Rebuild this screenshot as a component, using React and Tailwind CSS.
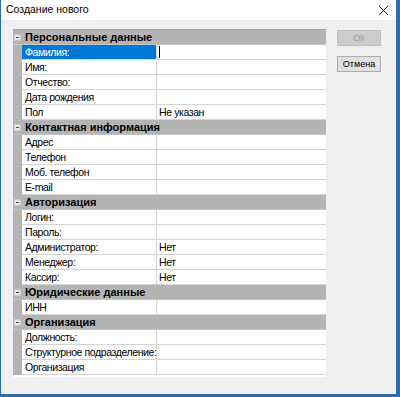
import React from 'react';

const sections = [
  {
    title: 'Персональные данные',
    rows: [
      ['Фамилия:', '', true],
      ['Имя:', ''],
      ['Отчество:', ''],
      ['Дата рождения', ''],
      ['Пол', 'Не указан'],
    ],
  },
  {
    title: 'Контактная информация',
    rows: [
      ['Адрес', ''],
      ['Телефон', ''],
      ['Моб. телефон', ''],
      ['E-mail', ''],
    ],
  },
  {
    title: 'Авторизация',
    rows: [
      ['Логин:', ''],
      ['Пароль:', ''],
      ['Администратор:', 'Нет'],
      ['Менеджер:', 'Нет'],
      ['Кассир:', 'Нет'],
    ],
  },
  {
    title: 'Юридические данные',
    rows: [['ИНН', '']],
  },
  {
    title: 'Организация',
    rows: [
      ['Должность:', ''],
      ['Структурное подразделение:', ''],
      ['Организация', ''],
    ],
  },
];

const MinusBox = () => (
  <div className="w-[7px] h-[7px] bg-[#e8e8e8] border border-[#c8c8c8] flex items-center justify-center">
    <div className="w-[3px] h-px bg-[#404040]" />
  </div>
);

const CategoryRow = ({ title }) => (
  <div className="flex h-[15px] bg-[#b4b4b4] border-b border-[#c4c4c4]">
    <div className="w-[9px] flex items-center justify-center">
      <MinusBox />
    </div>
    <div className="pl-[3px] font-bold text-[11px] leading-[15px] text-black">{title}</div>
  </div>
);

const ItemRow = ({ label, value, selected }) => (
  <div className="flex h-[15px] text-[10.5px] tracking-[-0.4px]">
    <div className="w-[9px] bg-[#b4b4b4]" />
    <div
      className={
        selected
          ? 'w-[134px] bg-[#0078d7] text-white pl-[3px] leading-[15px] border-b border-[#d4d4d4]'
          : 'w-[134px] bg-white text-black pl-[3px] leading-[15px] border-b border-[#d4d4d4] whitespace-nowrap'
      }
    >
      {label}
    </div>
    <div className="w-px bg-[#d4d4d4]" />
    <div className="flex-1 bg-white border-b border-[#d4d4d4] pl-[2px] leading-[15px] text-black flex items-center">
      {selected ? <div className="w-px h-[12px] bg-black" /> : value}
    </div>
  </div>
);

export default function App() {
  return (
    <div
      className="w-[400px] h-[397px] bg-[#2b6cb3] pl-px pr-[4px] pb-[3px] flex flex-col text-[11px]"
      style={{ fontFamily: '"Liberation Sans", Arial, sans-serif' }}
    >
      <div className="h-[20px] bg-white flex items-center justify-between pl-[5px] pr-[7px]">
        <span className="text-[10.5px] text-black">Создание нового</span>
        <svg width="11" height="11" viewBox="0 0 11 11">
          <path d="M1 1 L10 10 M10 1 L1 10" stroke="#222" strokeWidth="1" />
        </svg>
      </div>
      <div className="flex-1 bg-[#f0f0f0] flex pl-[12px] pt-[9px]">
        <div className="w-[313px] h-[348px] bg-white border-t border-[#a0a0a0] flex flex-col">
          {sections.map((s) => (
            <React.Fragment key={s.title}>
              <CategoryRow title={s.title} />
              {s.rows.map(([label, value, selected]) => (
                <ItemRow key={label + s.title} label={label} value={value} selected={selected} />
              ))}
            </React.Fragment>
          ))}
        </div>
        <div className="ml-[11px] flex flex-col gap-[10px] pt-[1px]">
          <button className="w-[44px] h-[16px] bg-[#cccccc] border border-[#bfbfbf] text-[#a0a0a0] text-[9px] leading-none">
            Ok
          </button>
          <button className="w-[44px] h-[16px] bg-[#e1e1e1] border border-[#adadad] text-black text-[9px] leading-none">
            Отмена
          </button>
        </div>
      </div>
    </div>
  );
}
